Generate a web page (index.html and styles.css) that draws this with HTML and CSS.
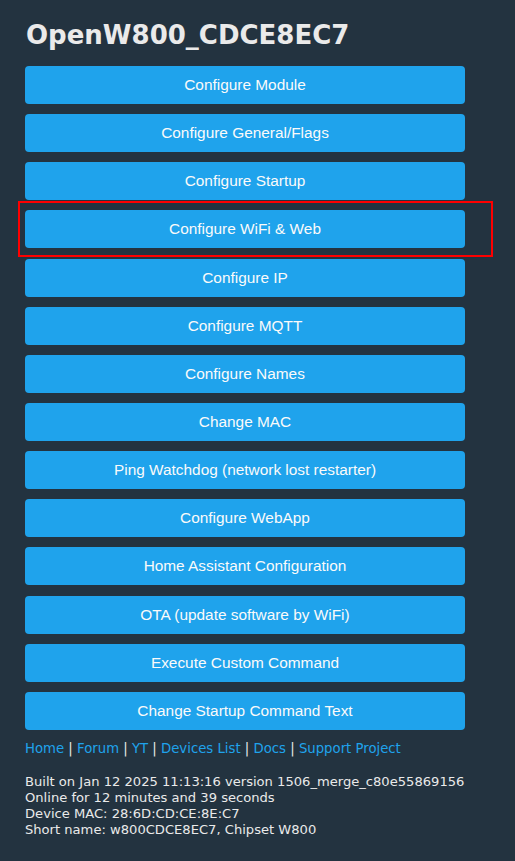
FILE: index.html
```html
<!DOCTYPE html>
<html>
<head>
<meta charset="utf-8">
<link rel="stylesheet" href="styles.css">
</head>
<body>
<div class="page">
  <h1 class="title">OpenW800_CDCE8EC7</h1>
  <div class="menu">
    <a class="btn">Configure Module</a>
    <a class="btn">Configure General/Flags</a>
    <a class="btn">Configure Startup</a>
    <a class="btn highlighted">Configure WiFi &amp; Web<span class="mark"></span></a>
    <a class="btn">Configure IP</a>
    <a class="btn">Configure MQTT</a>
    <a class="btn">Configure Names</a>
    <a class="btn">Change MAC</a>
    <a class="btn">Ping Watchdog (network lost restarter)</a>
    <a class="btn">Configure WebApp</a>
    <a class="btn">Home Assistant Configuration</a>
    <a class="btn">OTA (update software by WiFi)</a>
    <a class="btn">Execute Custom Command</a>
    <a class="btn">Change Startup Command Text</a>
  </div>
  <div class="links">
    <a>Home</a> | <a>Forum</a> | <a>YT</a> | <a>Devices List</a> | <a>Docs</a> | <a>Support Project</a>
  </div>
  <div class="info">
    Built on Jan 12 2025 11:13:16 version 1506_merge_c80e55869156<br>
    Online for 12 minutes and 39 seconds<br>
    Device MAC: 28:6D:CD:CE:8E:C7<br>
    Short name: w800CDCE8EC7, Chipset W800
  </div>
</div>
</body>
</html>
```

FILE: styles.css
```css
html, body {
  margin: 0;
  padding: 0;
  background: #233340;
}
body {
  font-family: "DejaVu Sans", Verdana, sans-serif;
  color: #eaeaea;
}
.page {
  width: 440px;
  padding: 18px 0 0 25px;
}
.title {
  margin: 0 0 14px 1px;
  font-size: 26px;
  font-weight: bold;
  line-height: 34px;
  color: #eaeaea;
}
.menu {
  display: flex;
  flex-direction: column;
  gap: 10.15px;
}
.btn {
  position: relative;
  display: flex;
  align-items: center;
  justify-content: center;
  height: 38px;
  box-sizing: border-box;
  background: #1fa3ec;
  border-radius: 4px;
  color: #fafafa;
  font-family: "Liberation Sans", Arial, sans-serif;
  font-size: 15.4px;
}
.mark {
  position: absolute;
  left: -7px;
  top: -9px;
  width: 475px;
  height: 56px;
  box-sizing: border-box;
  border: 2px solid #ff0000;
}
.links {
  margin-top: 11px;
  font-size: 13.25px;
  line-height: 16px;
  color: #eaeaea;
}
.links a {
  color: #1fa3ec;
}
.info {
  margin-top: 17px;
  font-size: 13.1px;
  line-height: 16px;
  color: #eaeaea;
}
```
